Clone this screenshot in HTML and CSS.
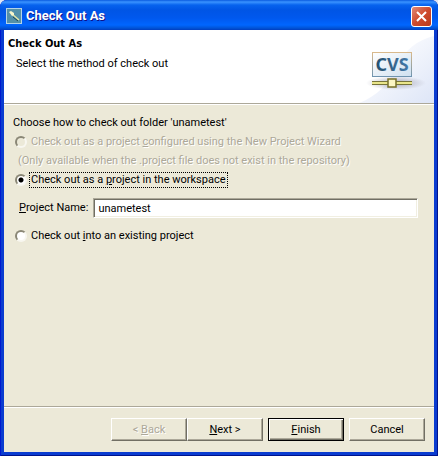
FILE: index.html
```html
<!DOCTYPE html>
<html lang="en">
<head>
    <meta charset="UTF-8">
    <meta name="viewport" content="width=device-width, initial-scale=1.0">
    <title>Check Out As</title>
    <link rel="stylesheet" href="styles.css">
</head>
<body>
    <form class="window">
        <div class="title-bar">
            <svg class="title-icon" width="16" height="16" viewBox="0 0 16 16">
                <rect x="0.5" y="0.5" width="15" height="15" fill="#5590a8" stroke="#b4d3e6"/>
                <path d="M7 9l5 4" stroke="#1f4654" stroke-width="1"/>
                <path d="M6 6l7 6" stroke="#e8e9a8" stroke-width="1.4"/>
                <path d="M3 4L5 3L8 5L8 7L6 8Z" fill="#f8f6cc"/>
            </svg>
            <span class="title-text">Check Out As</span>
            <button type="button" class="close-btn" aria-label="Close">
                <svg width="13" height="13" viewBox="0 0 13 13">
                    <path d="M2 2l9 9M11 2l-9 9" stroke="#fff" stroke-width="2"/>
                </svg>
            </button>
        </div>

        <div class="banner">
            <div class="banner-text">
                <h1>Check Out As</h1>
                <p>Select the method of check out</p>
            </div>
            <svg class="banner-art" width="75" height="73" viewBox="0 0 75 73">
                <defs>
                    <linearGradient id="sky" x1="0" y1="0" x2="1" y2="1">
                        <stop offset="0" stop-color="#ffffff"/>
                        <stop offset="0.4" stop-color="#f6f8fd"/>
                        <stop offset="1" stop-color="#dde5f7"/>
                    </linearGradient>
                    <linearGradient id="card" x1="0" y1="0" x2="1" y2="1">
                        <stop offset="0" stop-color="#ffffff"/>
                        <stop offset="1" stop-color="#cfe0f0"/>
                    </linearGradient>
                    <linearGradient id="edge" x1="0" y1="0" x2="0" y2="1">
                        <stop offset="0" stop-color="#d9b98c"/>
                        <stop offset="1" stop-color="#6f94b0"/>
                    </linearGradient>
                    <linearGradient id="letters" x1="0" y1="0" x2="1" y2="0">
                        <stop offset="0" stop-color="#24506f"/>
                        <stop offset="1" stop-color="#4478a8"/>
                    </linearGradient>
                    <radialGradient id="shade">
                        <stop offset="0" stop-color="#a9a9b8"/>
                        <stop offset="1" stop-color="#a9a9b8" stop-opacity="0"/>
                    </radialGradient>
                </defs>
                <path d="M0 73C18 66 30 54 38 36C46 20 58 10 75 6V73Z" fill="url(#sky)"/>
                <ellipse cx="37" cy="53" rx="30" ry="7" fill="url(#shade)"/>
                <rect x="13.5" y="22.5" width="39" height="24" fill="url(#card)" stroke="url(#edge)"/>
                <text x="33" y="41" class="cvs-text" text-anchor="middle" fill="url(#letters)">CVS</text>
                <rect x="13" y="51" width="40" height="4" fill="#77743a"/>
                <rect x="13" y="52" width="40" height="2" fill="#e9e58a"/>
                <rect x="29" y="49" width="8" height="8" fill="#fbf6c4" stroke="#77702a" stroke-width="1.5"/>
            </svg>
        </div>

        <div class="content">
            <p class="row">Choose how to check out folder 'unametest'</p>
            <div class="row disabled">
                <input type="radio" name="method" id="wizard" disabled>
                <label for="wizard">Check out as a project <u>c</u>onfigured using the New Project Wizard</label>
            </div>
            <p class="row indent disabled">(Only available when the .project file does not exist in the repository)</p>
            <div class="row">
                <input type="radio" name="method" id="workspace" checked>
                <label for="workspace" class="focused">Check out as a <u>p</u>roject in the workspace</label>
            </div>
            <div class="row name-row indent">
                <label for="projectName"><u>P</u>roject Name:</label>
                <input type="text" id="projectName" value="unametest">
            </div>
            <div class="row">
                <input type="radio" name="method" id="existing">
                <label for="existing">Check out <u>i</u>nto an existing project</label>
            </div>
        </div>

        <div class="footer">
            <div class="nav-buttons">
                <button type="button" class="btn" disabled>&lt; <u>B</u>ack</button>
                <button type="button" class="btn"><u>N</u>ext &gt;</button>
            </div>
            <button type="submit" class="btn default-btn"><u>F</u>inish</button>
            <button type="button" class="btn">Cancel</button>
        </div>
    </form>
</body>
</html>
```

FILE: styles.css
```css
* {
    margin: 0;
    padding: 0;
    box-sizing: border-box;
}

body {
    background: #dfe6f4;
    font-family: Roboto, "Liberation Sans", sans-serif;
    font-size: 11px;
    line-height: 14px;
    color: #000;
}

.window {
    display: flex;
    flex-direction: column;
    min-height: 100vh;
    padding: 0 4px 4px;
    background: #ece9d8;
    background-clip: content-box;
    border-radius: 7px 7px 0 0;
    box-shadow: inset 1px 0 #0019cf, inset -1px -1px #00138c, inset 0 0 0 4px #0a3cd0;
    overflow: hidden;
}

.title-bar {
    display: flex;
    align-items: center;
    gap: 4px;
    height: 30px;
    margin: 0 -4px;
    padding: 2px 6px 0;
    background: linear-gradient(#0a5be0 0, #3a93ff 2px, #0763ee 5px, #0055e5 10px, #0058ee 18px, #0066ff 25px, #0054d8 28px, #003dc0 30px);
}

.title-text {
    flex: 1;
    font-size: 13px;
    font-weight: bold;
    color: #fff;
    text-shadow: 1px 1px #0f1089;
}

.close-btn {
    display: flex;
    align-items: center;
    justify-content: center;
    width: 21px;
    height: 21px;
    border: 1px solid #fff;
    border-radius: 3px;
    background: linear-gradient(135deg, #e08a78, #cf4a2c 50%, #b83a1c);
}

.banner {
    display: flex;
    justify-content: space-between;
    height: 74px;
    background: #fff;
    border-bottom: 1px solid #aca899;
}

.banner-text {
    padding: 7px 4px;
}

.banner h1 {
    font-family: "DejaVu Sans Condensed", "Liberation Sans", sans-serif;
    font-size: 11px;
    line-height: 14px;
}

.banner p {
    padding: 6px 8px;
}

.cvs-text {
    font-family: "Noto Sans", "Open Sans", sans-serif;
    font-size: 18px;
    font-weight: bold;
}

.content {
    flex: 1;
    display: flex;
    flex-direction: column;
    gap: 5px;
    padding: 11px 16px 11px 9px;
    border-top: 1px solid #fff;
}

.row {
    display: flex;
    align-items: center;
    min-height: 14px;
    white-space: nowrap;
}

.indent {
    padding-left: 5px;
}

.disabled {
    color: #aca899;
    text-shadow: 1px 1px #fff;
}

input[type="radio"] {
    appearance: none;
    width: 12px;
    height: 12px;
    margin: 0 3px 0 2px;
    border: 2px solid;
    border-color: #8a8776 #f8f7f0 #f8f7f0 #8a8776;
    border-radius: 50%;
    background: #fff;
}

input[type="radio"]:checked {
    background: radial-gradient(circle, #000 2px, #fff 3px);
}

input[type="radio"]:disabled {
    background: #ece9d8;
}

.content label {
    padding: 0 1px;
}

.content .focused {
    outline: 1px dotted #000;
}

.name-row {
    gap: 4px;
    margin: 6px 0;
}

input[type="text"] {
    flex: 1;
    min-width: 0;
    height: 20px;
    padding: 0 4px;
    border: 1px solid;
    border-color: #aca899 #fff #fff #aca899;
    box-shadow: inset 1px 1px #716f64, inset -1px -1px #f1efe2;
    background: #fff;
    font: inherit;
    color: inherit;
}

.footer {
    display: flex;
    justify-content: flex-end;
    gap: 5px;
    padding: 11px 9px;
    border-top: 1px solid #aca899;
    box-shadow: inset 0 1px #fff;
}

.nav-buttons {
    display: flex;
}

.btn {
    width: 76px;
    height: 23px;
    border: 1px solid;
    border-color: #fff #716f64 #716f64 #fff;
    box-shadow: inset -1px -1px #aca899;
    background: #ece9d8;
    font: inherit;
    color: #000;
}

.btn:disabled {
    color: #aca899;
    text-shadow: 1px 1px #fff;
}

.default-btn {
    border-color: #000;
    box-shadow: inset 1px 1px #fff, inset -1px -1px #716f64, inset -2px -2px #aca899;
}
```
